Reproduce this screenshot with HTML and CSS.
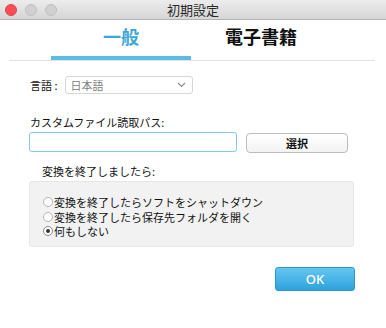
FILE: index.html
```html
<!DOCTYPE html>
<html lang="ja">
<head>
  <meta charset="UTF-8" />
  <title>初期設定</title>
  <link rel="stylesheet" href="styles.css">
</head>
<body>
  <div class="titlebar">
    <div class="lights">
      <span class="light close"></span>
      <span class="light"></span>
      <span class="light"></span>
    </div>
    <div class="title">初期設定</div>
  </div>

  <div class="tabs">
    <div class="tab active">一般</div>
    <div class="tab">電子書籍</div>
  </div>

  <div class="content">
    <div class="lang-row">
      <span class="label">言語 :</span>
      <div class="select">
        <span>日本語</span>
        <svg width="9" height="6" viewBox="0 0 9 6"><path d="M1 1 L4.5 4.5 L8 1" fill="none" stroke="#8a8a8a" stroke-width="1.1"/></svg>
      </div>
    </div>

    <div class="label path-label">カスタムファイル読取パス:</div>
    <div class="path-row">
      <input type="text" class="path-input" />
      <button class="btn">選択</button>
    </div>

    <div class="group-title">変換を終了しましたら:</div>
    <div class="group">
      <label class="radio"><span class="dot"></span>変換を終了したらソフトをシャットダウン</label>
      <label class="radio"><span class="dot"></span>変換を終了したら保存先フォルダを開く</label>
      <label class="radio"><span class="dot checked"></span>何もしない</label>
    </div>

    <div class="actions">
      <button class="ok">OK</button>
    </div>
  </div>
</body>
</html>
```

FILE: styles.css
```css
body {
  margin: 0;
  width: 386px;
  height: 328px;
  background: #fff;
  font-family: "Noto Sans CJK JP", "Noto Sans", sans-serif;
  color: #111;
  overflow: hidden;
}
.titlebar {
  height: 19px;
  border-bottom: 1px solid #b3b3b3;
  background: linear-gradient(#ececec, #d6d6d6);
  display: flex;
  align-items: center;
  position: relative;
}
.lights {
  display: flex;
  gap: 8px;
  padding-left: 5px;
}
.light {
  width: 12px;
  height: 12px;
  border-radius: 50%;
  box-sizing: border-box;
  background: #d0d0d0;
  border: 1px solid #c0c0c0;
}
.light.close {
  background: #fc4e55;
  border-color: #e2434a;
}
.title {
  position: absolute;
  left: 0;
  right: 0;
  text-align: center;
  font-size: 13px;
  line-height: 19px;
  color: #2a2a2a;
  pointer-events: none;
}
.tabs {
  display: flex;
  margin: 0 11px 0 9px;
  padding-left: 42px;
  border-bottom: 1px solid #e2e2e2;
}
.tab {
  width: 140px;
  height: 36px;
  line-height: 32px;
  text-align: center;
  font-size: 18px;
  font-weight: bold;
  color: #111;
  border-bottom: 4px solid transparent;
}
.tab.active {
  color: #3fa6d6;
  border-bottom-color: #5bbde3;
}
.content {
  padding: 15px 0 0 29px;
}
.label {
  font-size: 11px;
  line-height: 14px;
}
.lang-row {
  display: flex;
  align-items: center;
  gap: 7px;
  padding-left: 1px;
}
.select {
  width: 128px;
  height: 18px;
  box-sizing: border-box;
  border: 1px solid #d6d6d6;
  border-radius: 3px;
  display: flex;
  align-items: center;
  justify-content: space-between;
  padding: 0 6px 0 5px;
  font-size: 11px;
  color: #808080;
}
.path-label {
  margin-top: 21px;
  padding-left: 1px;
}
.path-row {
  display: flex;
  gap: 9px;
  margin-top: 3px;
}
.path-input {
  width: 208px;
  height: 20px;
  box-sizing: border-box;
  border: 1px solid #82c9ec;
  border-radius: 3px;
  margin: 0;
  outline: none;
}
.btn {
  width: 102px;
  height: 20px;
  margin: 1px 0 0;
  padding: 0;
  border: 1px solid #bcbcbc;
  border-radius: 4px;
  background: linear-gradient(#fff, #f3f3f3);
  font-family: inherit;
  font-size: 11px;
  font-weight: bold;
  color: #111;
}
.group-title {
  margin: 11px 0 0 11px;
  font-size: 11px;
  line-height: 14px;
  padding: 0 3px 0 2px;
  display: inline-block;
  background: #fff;
}
.group {
  width: 325px;
  height: 66px;
  box-sizing: border-box;
  background: #f2f2f2;
  border: 1px solid #e6e6e6;
  border-radius: 3px;
  padding: 13px 0 0 13px;
}
.radio {
  display: flex;
  align-items: center;
  font-size: 11px;
  line-height: 14.5px;
}
.dot {
  width: 10px;
  height: 10px;
  box-sizing: border-box;
  border: 1px solid #b4b4b4;
  border-radius: 50%;
  background: #fff;
  margin-right: 1px;
  display: flex;
  align-items: center;
  justify-content: center;
}
.dot.checked {
  border-color: #8a8a8a;
}
.dot.checked::after {
  content: "";
  width: 4px;
  height: 4px;
  border-radius: 50%;
  background: #333;
}
.actions {
  display: flex;
  justify-content: flex-end;
  width: 326px;
  margin-top: 20px;
}
.ok {
  width: 80px;
  height: 24px;
  padding: 0;
  border: 1px solid #2a98d2;
  border-radius: 3px;
  background: linear-gradient(#66c6f1, #2ea3dc);
  color: #fff;
  font-family: "Noto Sans", sans-serif;
  font-size: 13px;
  font-weight: 500;
}
```
